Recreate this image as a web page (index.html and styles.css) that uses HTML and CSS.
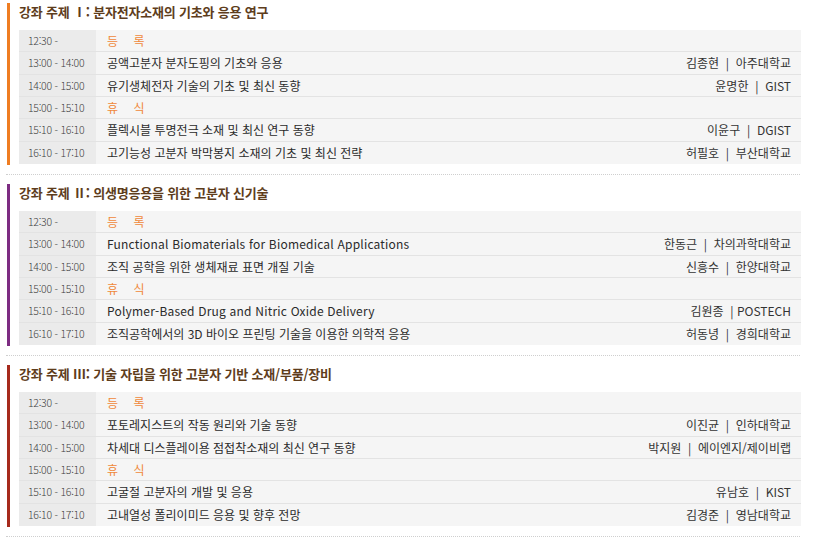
FILE: index.html
```html
<!DOCTYPE html>
<html lang="ko">
<head>
<meta charset="utf-8">
<link rel="stylesheet" href="styles.css">
</head>
<body>
<div class="page">
  <section class="session s1">
    <h2 class="title">강좌 주제 Ⅰ: 분자전자소재의 기초와 응용 연구</h2>
    <div class="table">
      <div class="row"><div class="time">12:30 -</div><div class="desc"><span class="break">등　 록</span></div></div>
      <div class="row"><div class="time">13:00 - 14:00</div><div class="desc"><span>공액고분자 분자도핑의 기초와 응용</span><span class="who">김종현 &nbsp;|&nbsp; 아주대학교</span></div></div>
      <div class="row"><div class="time">14:00 - 15:00</div><div class="desc"><span>유기생체전자 기술의 기초 및 최신 동향</span><span class="who">윤명한 &nbsp;|&nbsp; GIST</span></div></div>
      <div class="row"><div class="time">15:00 - 15:10</div><div class="desc"><span class="break">휴　 식</span></div></div>
      <div class="row"><div class="time">15:10 - 16:10</div><div class="desc"><span>플렉시블 투명전극 소재 및 최신 연구 동향</span><span class="who">이윤구 &nbsp;|&nbsp; DGIST</span></div></div>
      <div class="row"><div class="time">16:10 - 17:10</div><div class="desc"><span>고기능성 고분자 박막봉지 소재의 기초 및 최신 전략</span><span class="who">허필호 &nbsp;|&nbsp; 부산대학교</span></div></div>
    </div>
  </section>
  <hr class="sep">
  <section class="session s2">
    <h2 class="title">강좌 주제 Ⅱ: 의생명응용을 위한 고분자 신기술</h2>
    <div class="table">
      <div class="row"><div class="time">12:30 -</div><div class="desc"><span class="break">등　 록</span></div></div>
      <div class="row"><div class="time">13:00 - 14:00</div><div class="desc"><span class="en">Functional Biomaterials for Biomedical Applications</span><span class="who">한동근 &nbsp;|&nbsp; 차의과학대학교</span></div></div>
      <div class="row"><div class="time">14:00 - 15:00</div><div class="desc"><span>조직 공학을 위한 생체재료 표면 개질 기술</span><span class="who">신흥수 &nbsp;|&nbsp; 한양대학교</span></div></div>
      <div class="row"><div class="time">15:00 - 15:10</div><div class="desc"><span class="break">휴　 식</span></div></div>
      <div class="row"><div class="time">15:10 - 16:10</div><div class="desc"><span class="en">Polymer-Based Drug and Nitric Oxide Delivery</span><span class="who">김원종 &nbsp;| POSTECH</span></div></div>
      <div class="row"><div class="time">16:10 - 17:10</div><div class="desc"><span>조직공학에서의 3D 바이오 프린팅 기술을 이용한 의학적 응용</span><span class="who">허동녕 &nbsp;|&nbsp; 경희대학교</span></div></div>
    </div>
  </section>
  <hr class="sep">
  <section class="session s3">
    <h2 class="title">강좌 주제 Ⅲ: 기술 자립을 위한 고분자 기반 소재/부품/장비</h2>
    <div class="table">
      <div class="row"><div class="time">12:30 -</div><div class="desc"><span class="break">등　 록</span></div></div>
      <div class="row"><div class="time">13:00 - 14:00</div><div class="desc"><span>포토레지스트의 작동 원리와 기술 동향</span><span class="who">이진균 &nbsp;|&nbsp; 인하대학교</span></div></div>
      <div class="row"><div class="time">14:00 - 15:00</div><div class="desc"><span>차세대 디스플레이용 점접착소재의 최신 연구 동향</span><span class="who">박지원 &nbsp;|&nbsp; 에이엔지/제이비랩</span></div></div>
      <div class="row"><div class="time">15:00 - 15:10</div><div class="desc"><span class="break">휴　 식</span></div></div>
      <div class="row"><div class="time">15:10 - 16:10</div><div class="desc"><span>고굴절 고분자의 개발 및 응용</span><span class="who">유남호 &nbsp;|&nbsp; KIST</span></div></div>
      <div class="row"><div class="time">16:10 - 17:10</div><div class="desc"><span>고내열성 폴리이미드 응용 및 향후 전망</span><span class="who">김경준 &nbsp;|&nbsp; 영남대학교</span></div></div>
    </div>
  </section>
  <hr class="sep">
</div>
</body>
</html>
```

FILE: styles.css
```css
html, body {
  margin: 0;
  padding: 0;
  background: #ffffff;
}
body {
  font-family: "Noto Sans CJK KR", "Noto Sans", sans-serif;
  color: #333333;
}
.page {
  width: 794px;
  padding: 3px 0 0 6px;
}
.session {
  margin-left: 1px;
  border-left: 3px solid #ef7d22;
  padding-left: 9px;
  height: 162px;
  box-sizing: border-box;
}
.s2 { border-left-color: #7d2c82; }
.s3 { border-left-color: #a62a1d; }
.title {
  margin: 0;
  height: 27px;
  font-size: 13px;
  line-height: 18px;
  font-weight: bold;
  color: #5e3d1c;
  letter-spacing: -0.2px;
}
.table {
  width: 782px;
}
.row {
  display: flex;
  height: 22.33px;
  box-sizing: border-box;
  border-bottom: 1px solid #e3e3e3;
}
.row:last-child { border-bottom: none; }
.time {
  width: 77px;
  flex: none;
  background: #ebebeb;
  box-sizing: border-box;
  padding-left: 9px;
  font-size: 10.5px;
  font-weight: 300;
  letter-spacing: -0.25px;
  color: #404040;
  line-height: 21px;
}
.desc {
  flex: 1;
  display: flex;
  justify-content: space-between;
  background: #f5f5f5;
  padding: 0 10px 0 11px;
  font-size: 12px;
  line-height: 21px;
  color: #2a2a2a;
}
.en {
  letter-spacing: 0.2px;
}
.break {
  color: #f0883a;
}
.who {
  color: #333333;
}
.sep {
  margin: 9px 0 9px 0;
  width: 794px;
  border: none;
  border-top: 1px dotted #cfcfcf;
  height: 0;
}
```
